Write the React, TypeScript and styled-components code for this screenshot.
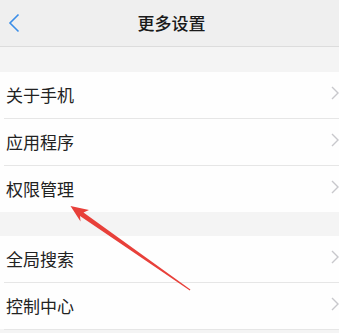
import React from 'react';
import styled, { createGlobalStyle } from 'styled-components';

const GlobalStyle = createGlobalStyle`
  html, body {
    margin: 0;
    padding: 0;
    background: #f4f4f4;
    font-family: "Noto Sans CJK SC", "Noto Sans", sans-serif;
  }
`;

const Page = styled.div`
  position: relative;
  width: 339px;
  height: 333px;
  overflow: hidden;
  background: #f4f4f4;
`;

const Header = styled.div`
  height: 46px;
  display: flex;
  align-items: center;
  justify-content: center;
  position: relative;
  background: #efefef;
  border-bottom: 1px solid #dcdcdc;
`;

const BackButton = styled.div`
  position: absolute;
  left: 8px;
  top: 13px;
  width: 12px;
  height: 20px;
  display: flex;
`;

const Title = styled.div`
  font-size: 17px;
  font-weight: 500;
  color: #1a1a1a;
  padding-left: 4px;
  padding-bottom: 1px;
`;

const Group = styled.div<{ $top: number }>`
  margin-top: ${(p) => p.$top}px;
  background: #fefefe;
`;

const Row = styled.div<{ $last?: boolean }>`
  height: 46px;
  display: flex;
  align-items: center;
  justify-content: space-between;
  padding-left: 6px;
  padding-bottom: 2px;
  box-sizing: border-box;
  position: relative;
  &::after {
    content: '';
    display: ${(p) => (p.$last ? 'none' : 'block')};
    position: absolute;
    left: 4px;
    right: 0;
    bottom: -1px;
    height: 1px;
    background: #e6e6e6;
  }
  & + & {
    margin-top: 1px;
  }
`;

const Label = styled.span`
  font-size: 17px;
  color: #222;
`;

const Chevron = styled.svg`
  width: 8px;
  height: 14px;
  margin-top: -2px;
  flex-shrink: 0;
`;

const Arrow = styled.svg`
  position: absolute;
  left: 0;
  top: 0;
  pointer-events: none;
`;

const RightChevron = () => (
  <Chevron viewBox="0 0 8 14">
    <path d="M1 1 L7 7 L1 13" fill="none" stroke="#c8c8cc" strokeWidth="1.4" />
  </Chevron>
);

const Item = ({ label, last }: { label: string; last?: boolean }) => (
  <Row $last={last}>
    <Label>{label}</Label>
    <RightChevron />
  </Row>
);

export default function App() {
  return (
    <Page>
      <GlobalStyle />
      <Header>
        <BackButton>
          <svg width="12" height="20" viewBox="0 0 12 20">
            <path d="M10.5 1.5 L2 10 L10.5 18.5" fill="none" stroke="#3b8ee8" strokeWidth="1.6" />
          </svg>
        </BackButton>
        <Title>更多设置</Title>
      </Header>
      <Group $top={25}>
        <Item label="关于手机" />
        <Item label="应用程序" />
        <Item label="权限管理" last />
      </Group>
      <Group $top={24}>
        <Item label="全局搜索" />
        <Item label="控制中心" />
      </Group>
      <Arrow width="339" height="333" viewBox="0 0 339 333">
        <polygon
          points="70.5,206 89,210 83.5,212.5 190.4,289.6 189.8,290.4 80,216 80.5,221.5"
          fill="#e8403a"
        />
      </Arrow>
    </Page>
  );
}
